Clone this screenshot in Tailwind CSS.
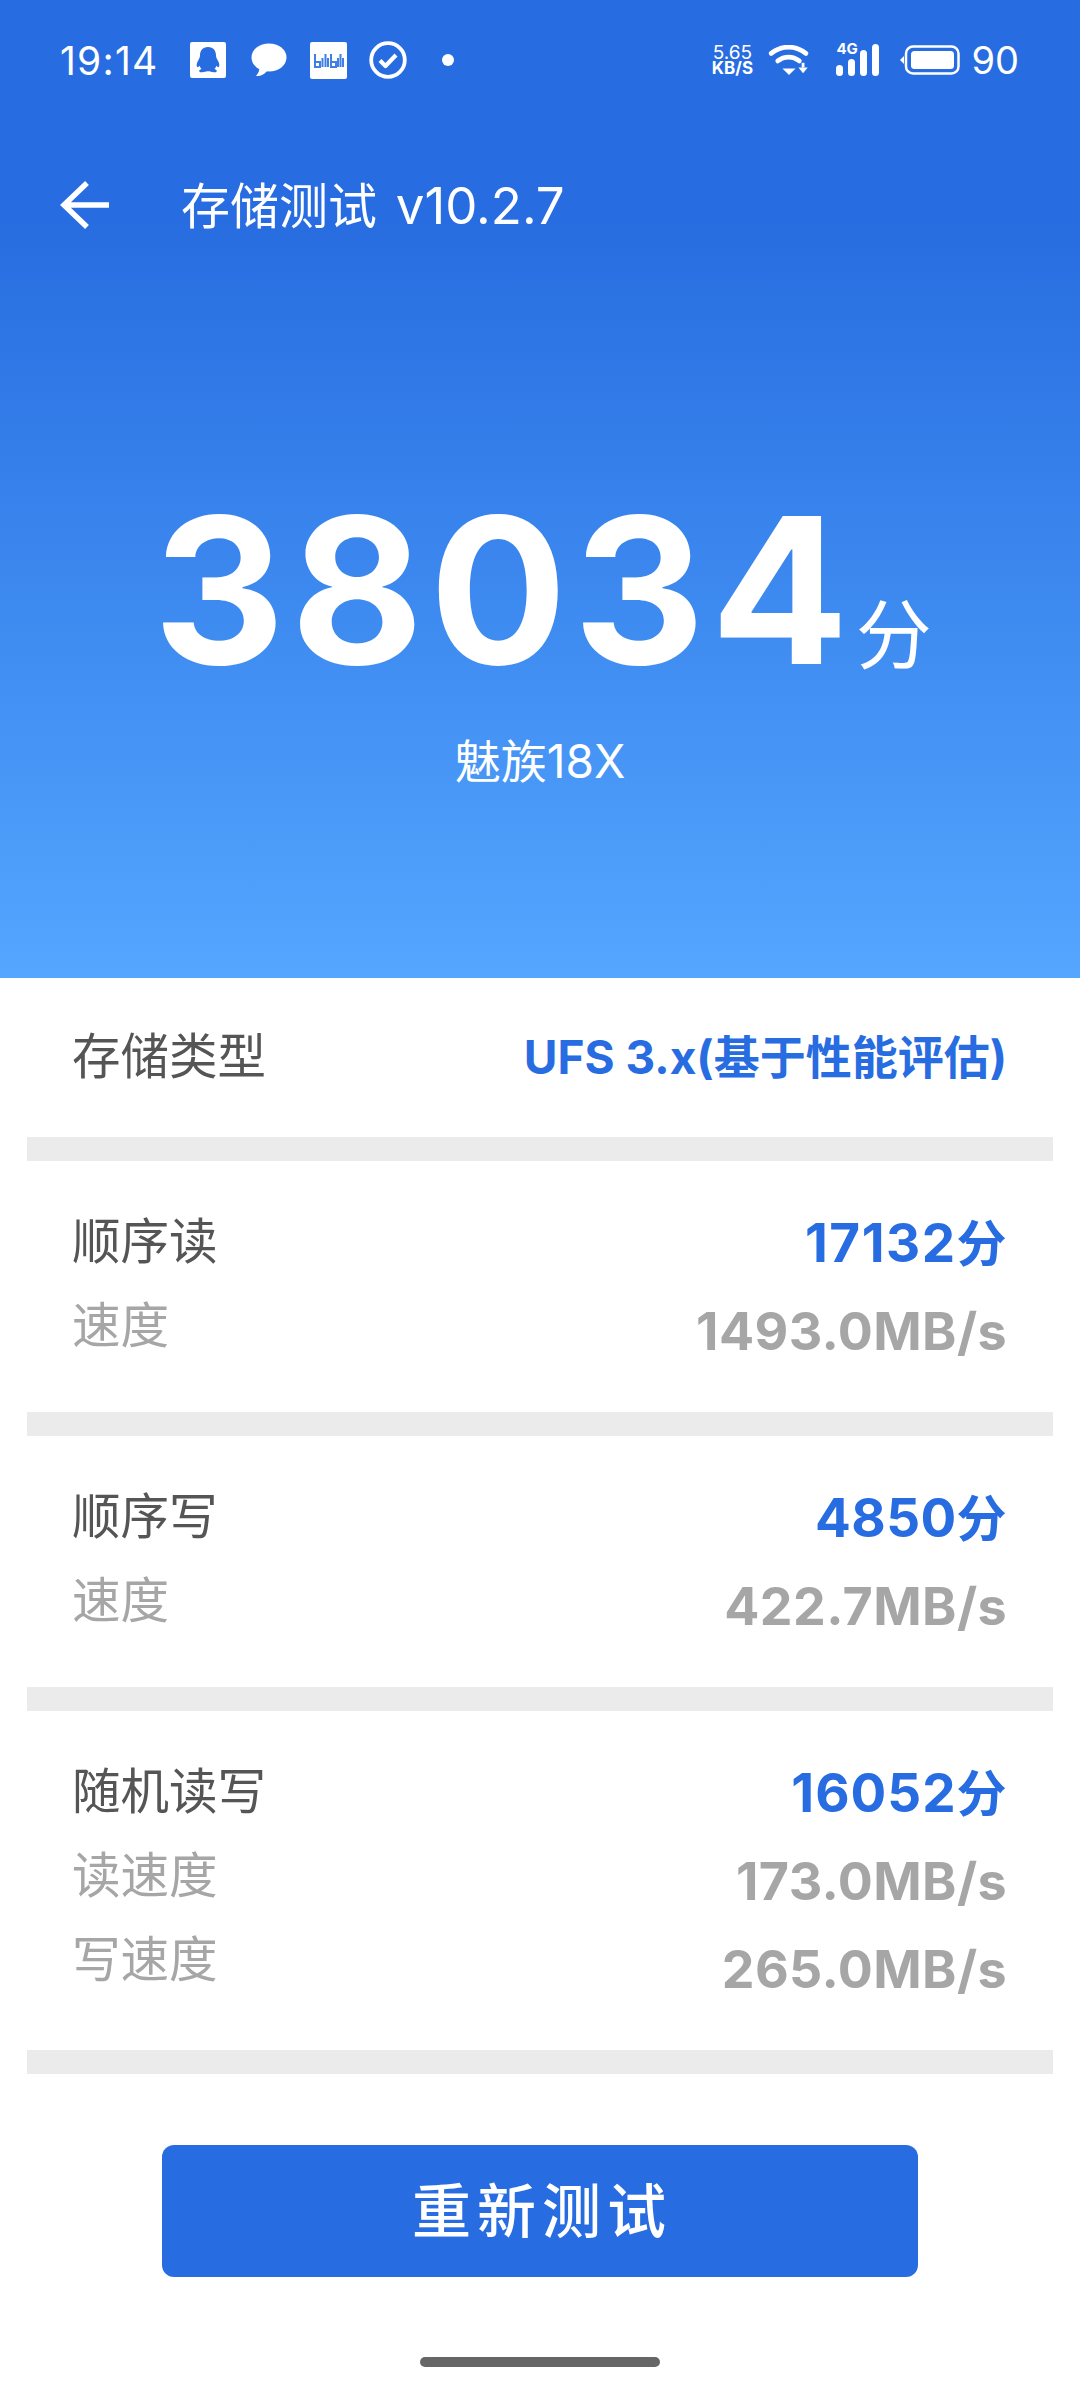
<!doctype html>
<html lang="zh-CN"><head><meta charset="utf-8"><script src="https://cdn.jsdelivr.net/npm/@tailwindcss/browser@4"></script></head>
<body class="bg-white">
<div class="w-[1080px] h-[2400px] overflow-hidden flex flex-col bg-white font-['Inter','Noto_Sans_CJK_SC',sans-serif]">
  <section class="h-[978px] flex flex-col text-white bg-linear-to-b from-[#276ce0] from-[22%] to-[#54a6ff]">
    <div class="h-[120px] pl-[60px] pr-[61px] flex items-center justify-between">
      <div class="flex items-center">
        <span class="text-[39px] leading-none w-[130px] tracking-[1.2px]">19:14</span>
        <svg class="w-[36px] h-[36px]" viewBox="0 0 36 36"><rect width="36" height="36" rx="2" fill="#fff"/><path d="M18 5c-5.500 0-8 3.700-8 8.500 0 1.500-.7 3-1.700 4.700-1.600 2.600-2.200 5.300-1.100 6.800.7.500 1.600-.2 2.400-1.300.3 1.300 1 2.400 1.900 3.200-1.600.6-2.700 1.500-2.100 2.500.6 1.100 3.800 1.100 5.800.4 1-.4 1.600-.6 2.800-.6s1.800.2 2.800.6c2 .7 5.200.7 5.800-.4.6-1-.5-1.900-2.100-2.500.9-.8 1.600-1.900 1.900-3.200.8 1.100 1.700 1.800 2.400 1.300 1.100-1.500.5-4.200-1.100-6.800-1-1.700-1.700-3.200-1.700-4.700C26 8.700 23.500 5 18 5z" fill="#276ce0"/></svg>
        <svg class="w-[36px] h-[34px] ml-[25px]" viewBox="0 0 36 34"><ellipse cx="18" cy="14.500" rx="17.500" ry="14" fill="#fff"/><path d="M8 24c1 3-.5 6-3 9 4 .5 8-1 11-5z" fill="#fff"/></svg>
        <svg class="w-[37px] h-[37px] ml-[23px]" viewBox="0 0 37 37"><rect width="37" height="37" rx="2" fill="#fff"/><g stroke="#3f7fe6" fill="none" stroke-width="2"><path d="M5 12v13h5v-5H5M12.500 16v9M15.500 12v13M18 16v9M21 12v13h5v-5h-5M28 16v9M30.500 12v13M33 16v9"/></g></svg>
        <svg class="w-[38px] h-[38px] ml-[22px]" viewBox="0 0 38 38" fill="none" stroke="#fff"><circle cx="19" cy="19" r="16.800" stroke-width="3.800"/><path d="M11 19.500l5.500 5.500 10.500-11" stroke-width="4.200" stroke-linejoin="round"/></svg>
        <span class="w-[12px] h-[12px] rounded-full bg-white ml-[35px]"></span>
      </div>
      <div class="flex items-center">
        <div class="w-[42px] flex flex-col items-center">
          <span class="text-[19px] leading-[17px]">5.65</span>
          <span class="text-[17px] leading-[15px] font-bold">KB/S</span>
        </div>
        <svg class="w-[44px] h-[30px] ml-[14px]" viewBox="0 0 44 32" fill="none" stroke="#fff" stroke-linecap="round"><path d="M3 9c11-9 26-9 37 0" stroke-width="5"/><path d="M10 17c7-5.500 16-5.500 23 0" stroke-width="5"/><path d="M15 25h14l-7 7z" fill="#fff" stroke="none"/><path d="M37 19v5" stroke-width="3" stroke-linecap="butt"/><path d="M32 24h10l-5 6z" fill="#fff" stroke="none"/></svg>
        <div class="relative w-[43px] h-[32px] ml-[25px] flex items-end gap-[5px]">
          <span class="absolute left-0 top-[-2px] text-[15px] leading-[14px] font-bold">4G</span>
          <span class="w-[7px] h-[11px] rounded-full bg-white"></span>
          <span class="w-[7px] h-[17px] rounded-full bg-white"></span>
          <span class="w-[7px] h-[26px] rounded-full bg-white"></span>
          <span class="w-[7px] h-[32px] rounded-full bg-white"></span>
        </div>
        <svg class="w-[60px] h-[30px] ml-[21px]" viewBox="0 0 60 30"><path d="M0 15l4-4v8z" fill="#fff"/><rect x="6" y="1.500" width="52.500" height="27" rx="7" fill="none" stroke="#fff" stroke-width="2.500"/><rect x="11" y="6" width="43" height="18" rx="3.500" fill="#fff"/></svg>
        <span class="text-[38px] leading-none ml-[11px]">90</span>
      </div>
    </div>
    <header class="h-[170px] flex items-center pl-[60px]">
      <svg class="w-[50px] h-[50px]" viewBox="0 0 50 50" fill="none" stroke="#fff" stroke-width="5.500"><path d="M49 25H4M27 3L4 25l23 22"/></svg>
      <h1 class="ml-[71px] text-[49px] leading-none whitespace-pre">存储测试 <span class="text-[51px] ml-[5px]">v10.2.7</span></h1>
    </header>
    <div class="mt-[200px] flex items-end justify-center pl-[5px]">
      <span class="text-[204px] leading-[200px] font-bold tracking-[6px]">38034</span>
      <span class="text-[76px] leading-[76px] ml-[1px] mb-[17px]">分</span>
    </div>
    <p class="mt-[41px] text-center text-[46px] leading-[60px]">魅族18X</p>
  </section>
  <main class="mx-[27px] text-[48.5px]">
    <div class="h-[159px] pl-[45px] pr-[46px] flex items-center justify-between">
      <span class="text-[#555555]">存储类型</span>
      <span class="font-bold text-[#276ce0] text-[46px]">UFS 3.x(基于性能评估)</span>
    </div>
    <div class="h-[24px] bg-[#ebebeb]"></div>
    <div class="h-[251px] pl-[45px] pr-[46px] pt-[38px] flex justify-between">
      <div class="leading-[84px] pt-[1px]"><div class="text-[#555555]">顺序读</div><div class="text-[#a6a6a6]">速度</div></div>
      <div class="leading-[88px] font-bold text-right text-[53px] tracking-[.4px]"><div class="text-[#276ce0]"><span class="tracking-[1.5px]">17132</span><span class="text-[50px]">分</span></div><div class="text-[#a6a6a6] text-[52px]">1493.0MB/s</div></div>
    </div>
    <div class="h-[24px] bg-[#ebebeb]"></div>
    <div class="h-[251px] pl-[45px] pr-[46px] pt-[38px] flex justify-between">
      <div class="leading-[84px] pt-[1px]"><div class="text-[#555555]">顺序写</div><div class="text-[#a6a6a6]">速度</div></div>
      <div class="leading-[88px] font-bold text-right text-[53px] tracking-[.4px]"><div class="text-[#276ce0]"><span class="tracking-[.4px]">4850</span><span class="text-[50px]">分</span></div><div class="text-[#a6a6a6] text-[52px]">422.7MB/s</div></div>
    </div>
    <div class="h-[24px] bg-[#ebebeb]"></div>
    <div class="h-[339px] pl-[45px] pr-[46px] pt-[38px] flex justify-between">
      <div class="leading-[84px] pt-[1px]"><div class="text-[#555555]">随机读写</div><div class="text-[#a6a6a6]">读速度</div><div class="text-[#a6a6a6]">写速度</div></div>
      <div class="leading-[88px] font-bold text-right text-[53px] tracking-[.4px]"><div class="text-[#276ce0]"><span class="tracking-[1px]">16052</span><span class="text-[50px]">分</span></div><div class="text-[#a6a6a6] text-[52px]">173.0MB/s</div><div class="text-[#a6a6a6] text-[52px]">265.0MB/s</div></div>
    </div>
    <div class="h-[24px] bg-[#ebebeb]"></div>
  </main>
  <button class="mt-[71px] mx-auto w-[756px] h-[132px] rounded-[12px] bg-[#276ce0] text-white text-[59px] font-medium tracking-[6px] pl-[4px] pt-[3px]">重新测试</button>
  <div class="mt-[80px] mx-auto w-[240px] h-[10px] rounded-full bg-[#666666]"></div>
</div>
</body></html>
